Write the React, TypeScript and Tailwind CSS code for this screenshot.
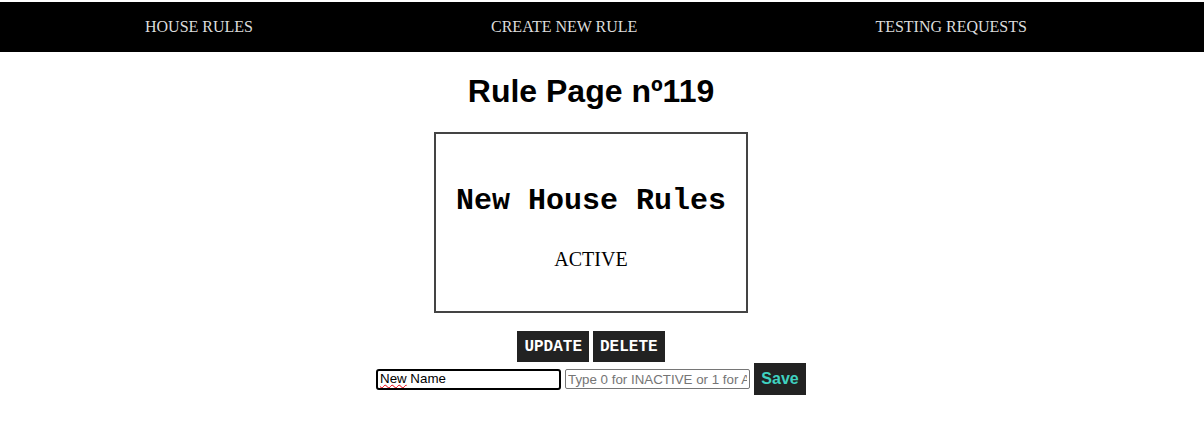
import React from 'react';

export default function App() {
  return (
    <div className="min-h-screen bg-white pt-[2px]">
      <nav className="flex h-[50px] items-center gap-[238px] bg-black pl-[145px] font-['Liberation_Serif',serif] text-[16px] text-[#dcdcdc]">
        <a className="whitespace-nowrap">HOUSE RULES</a>
        <a className="whitespace-nowrap">CREATE NEW RULE</a>
        <a className="whitespace-nowrap">TESTING REQUESTS</a>
      </nav>

      <main className="mr-[22px] flex flex-col items-center">
        <h1 className="mt-[21px] font-['Liberation_Sans',sans-serif] text-[32px] font-bold leading-[37px] text-black">
          Rule Page nº119
        </h1>

        <div className="mt-[22px] h-[181px] w-[314px] border-2 border-[#444] pt-[50px] text-center">
          <h2 className="font-['Liberation_Mono',monospace] text-[30px] font-bold leading-[34px] text-black">
            New House Rules
          </h2>
          <p className="mt-[30px] font-['Liberation_Serif',serif] text-[20px] leading-[23px] text-black">ACTIVE</p>
        </div>

        <div className="mt-[18px] flex gap-[4px]">
          <button className="h-[31px] bg-[#222] px-[7px] font-['Liberation_Mono',monospace] text-[16px] font-bold text-white">
            UPDATE
          </button>
          <button className="h-[31px] bg-[#222] px-[7px] font-['Liberation_Mono',monospace] text-[16px] font-bold text-white">
            DELETE
          </button>
        </div>

        <div className="mt-[1px] flex items-center gap-[4px] font-['Liberation_Sans',sans-serif] text-[13.33px]">
          <div className="flex h-[21px] w-[185px] items-start overflow-hidden rounded-[3px] border-2 border-black px-[2px] leading-[16px] text-black">
            <span className="underline decoration-red-600 decoration-wavy decoration-1 underline-offset-[1px]">New</span>
            <span>&nbsp;Name</span>
          </div>
          <input
            className="h-[20px] w-[185px] rounded-[2px] border border-[#767676] px-[2px] text-[13.33px] placeholder:text-[#757575]"
            placeholder="Type 0 for INACTIVE or 1 for ACTIVE"
          />
          <button className="h-[32px] w-[52px] bg-[#222] font-['Liberation_Sans',sans-serif] text-[16px] font-bold text-[#3fd1c0]">
            Save
          </button>
        </div>
      </main>
    </div>
  );
}
